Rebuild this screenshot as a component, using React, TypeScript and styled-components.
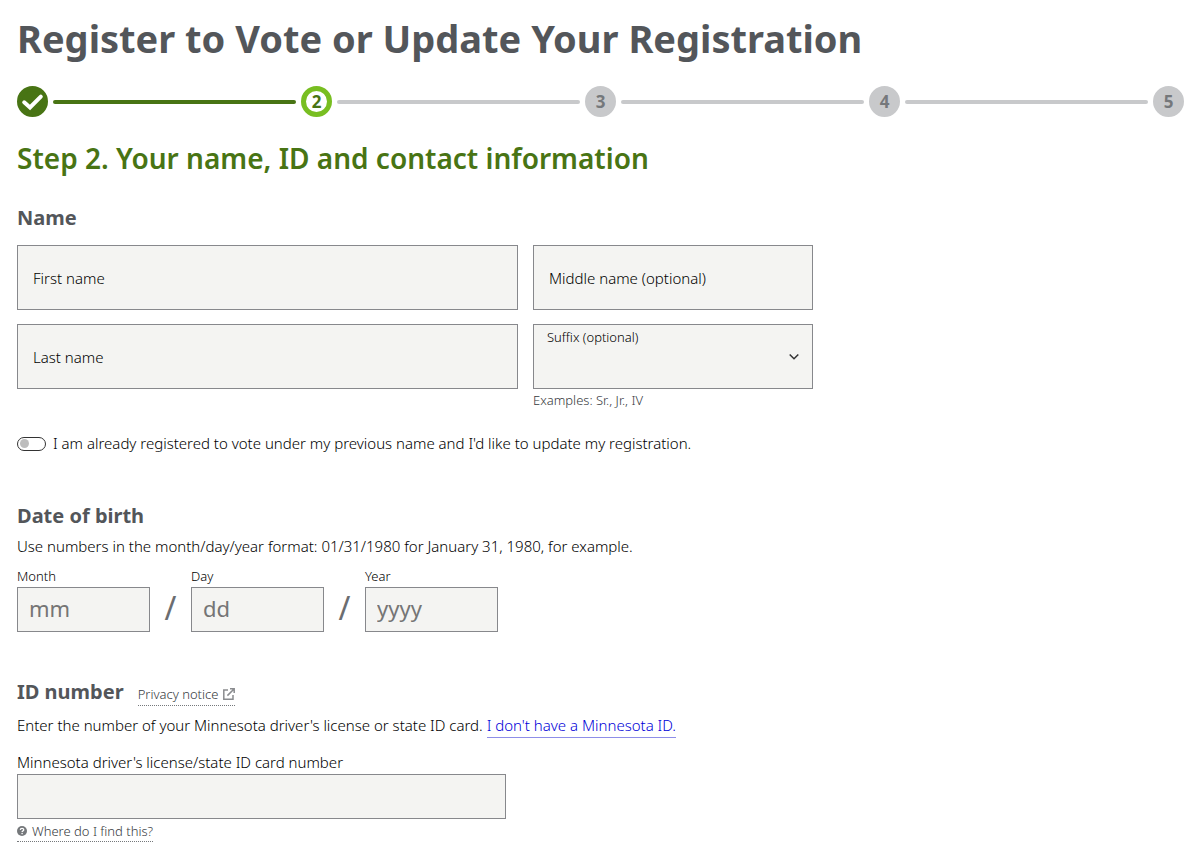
import React from "react";
import styled, { createGlobalStyle } from "styled-components";

const GlobalStyle = createGlobalStyle`
  *, *::before, *::after { box-sizing: border-box; }
  body {
    margin: 0;
    background: #fff;
    color: #000;
    font: 300 15px/23px "Noto Sans", sans-serif;
  }
  h1, h2, h3, p, ol { margin: 0; padding: 0; }
  input, select { font: inherit; color: inherit; border-radius: 0; }
`;

const Page = styled.main`
  padding: 13px 17px 24px;
`;

const Title = styled.h1`
  font-size: 38px;
  line-height: 50px;
  font-weight: 700;
  color: #53565a;
`;

const Stepper = styled.ol`
  display: flex;
  align-items: center;
  gap: 5px;
  margin-top: 23px;
  list-style: none;
`;

type StepState = "done" | "current" | "todo";

const stepColors = {
  done: { fill: "#487414", ring: "#487414", text: "#fff" },
  current: { fill: "#fff", ring: "#78be21", text: "#487414" },
  todo: { fill: "#c8c9cb", ring: "#c8c9cb", text: "#75787b" },
};

const Step = styled.li<{ $state: StepState }>`
  flex: none;
  display: grid;
  place-items: center;
  width: 31px;
  height: 31px;
  border-radius: 50%;
  border: 5px solid ${(p) => stepColors[p.$state].ring};
  background: ${(p) => stepColors[p.$state].fill};
  color: ${(p) => stepColors[p.$state].text};
  font-size: 17px;
  line-height: 21px;
  font-weight: 700;
`;

const CheckIcon = styled.svg`
  display: block;
  width: 21px;
  height: 21px;
  overflow: visible;
`;

const StepLine = styled.li<{ $done?: boolean }>`
  flex: 1;
  height: 4px;
  border-radius: 2px;
  background: ${(p) => (p.$done ? "#487414" : "#c8c9cb")};
`;

const StepTitle = styled.h2`
  margin-top: 23px;
  font-size: 28px;
  line-height: 36px;
  font-weight: 600;
  color: #487414;
`;

const Section = styled.section<{ $gap: number }>`
  margin-top: ${(p) => p.$gap}px;
`;

const SectionTitle = styled.h3`
  font-size: 20px;
  line-height: 28px;
  font-weight: 700;
  color: #53565a;
`;

const NameGrid = styled.div`
  display: grid;
  grid-template-columns: 501fr 280fr;
  gap: 14px 15px;
  align-items: start;
  max-width: 796px;
  margin-top: 13px;
`;

const Field = styled.div`
  position: relative;
`;

const fieldBox = `
  display: block;
  width: 100%;
  border: 1px solid #87888c;
  background: #f4f4f2;
`;

const TallInput = styled.input`
  ${fieldBox}
  height: 65px;
  padding: 0 15px;
`;

const TallSelect = styled.select`
  ${fieldBox}
  height: 65px;
  padding: 20px 36px 0 12px;
  appearance: none;
`;

const InnerLabel = styled.label<{ $floated?: boolean }>`
  position: absolute;
  left: ${(p) => (p.$floated ? 14 : 16)}px;
  top: ${(p) => (p.$floated ? 4 : 22)}px;
  font-size: ${(p) => (p.$floated ? 13 : 15)}px;
  line-height: ${(p) => (p.$floated ? 19 : 23)}px;
  pointer-events: none;
`;

const Chevron = styled.svg`
  position: absolute;
  right: 14px;
  top: 28px;
  width: 10px;
  height: 10px;
  pointer-events: none;
`;

const Hint = styled.p`
  margin-top: 2px;
  font-size: 13px;
  line-height: 19px;
  color: #36393d;
`;

const SwitchRow = styled.label`
  display: flex;
  align-items: center;
  gap: 7px;
  margin-top: 22px;
`;

const Switch = styled.input`
  appearance: none;
  flex: none;
  display: flex;
  align-items: center;
  width: 29px;
  height: 14px;
  margin: 0;
  padding: 0 2px;
  border: 1px solid #333;
  border-radius: 7px;
  background: #fff;

  &::before {
    content: "";
    width: 9px;
    height: 9px;
    border-radius: 50%;
    background: #bdbdbd;
  }
  &:checked::before {
    margin-left: auto;
    background: #487414;
  }
`;

const Text = styled.p<{ $gap: number }>`
  margin-top: ${(p) => p.$gap}px;
`;

const DateRow = styled.div`
  display: flex;
  align-items: flex-end;
  margin-top: 8px;
`;

const DateField = styled.div`
  width: 133px;
`;

const SmallLabel = styled.label`
  display: block;
  font-size: 13px;
  line-height: 21px;
`;

const ShortInput = styled.input`
  ${fieldBox}
  height: 45px;
  padding: 0 11px 4px;
  font-size: 22px;
  font-weight: 400;

  &::placeholder { color: #757575; opacity: 1; }
`;

const Slash = styled.span`
  width: 41px;
  text-align: center;
  font-size: 32px;
  font-weight: 400;
  line-height: 48px;
  color: #6b6d70;
`;

const HeadingRow = styled.div`
  display: flex;
  align-items: flex-start;
  gap: 14px;
`;

const HelpLink = styled.a`
  display: inline-flex;
  align-items: center;
  gap: 5px;
  font-size: 13px;
  line-height: 20px;
  color: #36393d;
  text-decoration: none;
  border-bottom: 1px dotted #75787b;
`;

const PrivacyLink = styled(HelpLink)`
  margin-top: 6px;
  padding-bottom: 1px;
`;

const InlineLink = styled.a`
  padding-bottom: 2px;
  color: #0000d8;
  text-decoration: none;
  border-bottom: 1px solid #8e8ee8;
`;

const IdField = styled.div`
  max-width: 489px;
  margin-top: 15px;
`;

const IdLabel = styled.label`
  display: block;
  margin-bottom: 2px;
  line-height: 20px;
`;

const HelpRow = styled.div`
  display: flex;
  margin-top: 2px;
`;

export default function App() {
  return (
    <>
      <GlobalStyle />
      <Page>
        <Title>Register to Vote or Update Your Registration</Title>

        <Stepper>
          <Step $state="done" aria-label="Step 1 complete">
            <CheckIcon viewBox="0 0 21 21" aria-hidden="true">
              <path
                d="M2.2 11.3 8 16.4 18.8 5.6"
                fill="none"
                stroke="#fff"
                strokeWidth="4"
                strokeLinecap="round"
              />
            </CheckIcon>
          </Step>
          <StepLine $done aria-hidden="true" />
          <Step $state="current" aria-current="step">2</Step>
          <StepLine aria-hidden="true" />
          <Step $state="todo">3</Step>
          <StepLine aria-hidden="true" />
          <Step $state="todo">4</Step>
          <StepLine aria-hidden="true" />
          <Step $state="todo">5</Step>
        </Stepper>

        <StepTitle>Step 2. Your name, ID and contact information</StepTitle>

        <Section $gap={28}>
          <SectionTitle>Name</SectionTitle>
          <NameGrid>
            <Field>
              <TallInput id="first" type="text" />
              <InnerLabel htmlFor="first">First name</InnerLabel>
            </Field>
            <Field>
              <TallInput id="middle" type="text" />
              <InnerLabel htmlFor="middle">Middle name (optional)</InnerLabel>
            </Field>
            <Field>
              <TallInput id="last" type="text" />
              <InnerLabel htmlFor="last">Last name</InnerLabel>
            </Field>
            <Field>
              <TallSelect id="suffix" defaultValue="" aria-describedby="suffix-hint">
                <option value="" />
              </TallSelect>
              <InnerLabel htmlFor="suffix" $floated>Suffix (optional)</InnerLabel>
              <Chevron viewBox="0 0 10 10" aria-hidden="true">
                <path d="M.7 2.5 5 6.8 9.3 2.5" fill="none" stroke="#333" strokeWidth="1.5" />
              </Chevron>
              <Hint id="suffix-hint">Examples: Sr., Jr., IV</Hint>
            </Field>
          </NameGrid>
          <SwitchRow>
            <Switch type="checkbox" role="switch" />
            I am already registered to vote under my previous name and I'd like to update my registration.
          </SwitchRow>
        </Section>

        <Section $gap={47}>
          <SectionTitle>Date of birth</SectionTitle>
          <Text $gap={5}>
            Use numbers in the month/day/year format: 01/31/1980 for January 31, 1980, for example.
          </Text>
          <DateRow>
            <DateField>
              <SmallLabel htmlFor="month">Month</SmallLabel>
              <ShortInput id="month" type="text" inputMode="numeric" placeholder="mm" />
            </DateField>
            <Slash aria-hidden="true">/</Slash>
            <DateField>
              <SmallLabel htmlFor="day">Day</SmallLabel>
              <ShortInput id="day" type="text" inputMode="numeric" placeholder="dd" />
            </DateField>
            <Slash aria-hidden="true">/</Slash>
            <DateField>
              <SmallLabel htmlFor="year">Year</SmallLabel>
              <ShortInput id="year" type="text" inputMode="numeric" placeholder="yyyy" />
            </DateField>
          </DateRow>
        </Section>

        <Section $gap={46}>
          <HeadingRow>
            <SectionTitle>ID number</SectionTitle>
            <PrivacyLink href="#privacy">
              Privacy notice
              <svg width="12" height="12" viewBox="0 0 12 12" fill="none" stroke="#8a8c8f" strokeWidth="1.5" aria-hidden="true">
                <path d="M5 2H.8v9.2H10V7M7 .8h4.2V5M11 1 4.4 7.6" />
              </svg>
            </PrivacyLink>
          </HeadingRow>
          <Text $gap={8}>
            Enter the number of your Minnesota driver's license or state ID card.{" "}
            <InlineLink href="#no-id">I don't have a Minnesota ID.</InlineLink>
          </Text>
          <IdField>
            <IdLabel htmlFor="idnumber">Minnesota driver's license/state ID card number</IdLabel>
            <ShortInput id="idnumber" type="text" />
          </IdField>
          <HelpRow>
            <HelpLink href="#where">
              <svg width="10" height="10" viewBox="0 0 10 10" fill="none" aria-hidden="true">
                <circle cx="5" cy="5" r="5" fill="#75787b" />
                <path d="M3.3 3.9C3.4 1.9 6.8 2 6.7 3.9 6.7 4.9 5.1 4.8 5.1 6" stroke="#fff" strokeWidth="1.3" />
                <circle cx="5.1" cy="7.6" r=".8" fill="#fff" />
              </svg>
              Where do I find this?
            </HelpLink>
          </HelpRow>
        </Section>
      </Page>
    </>
  );
}
